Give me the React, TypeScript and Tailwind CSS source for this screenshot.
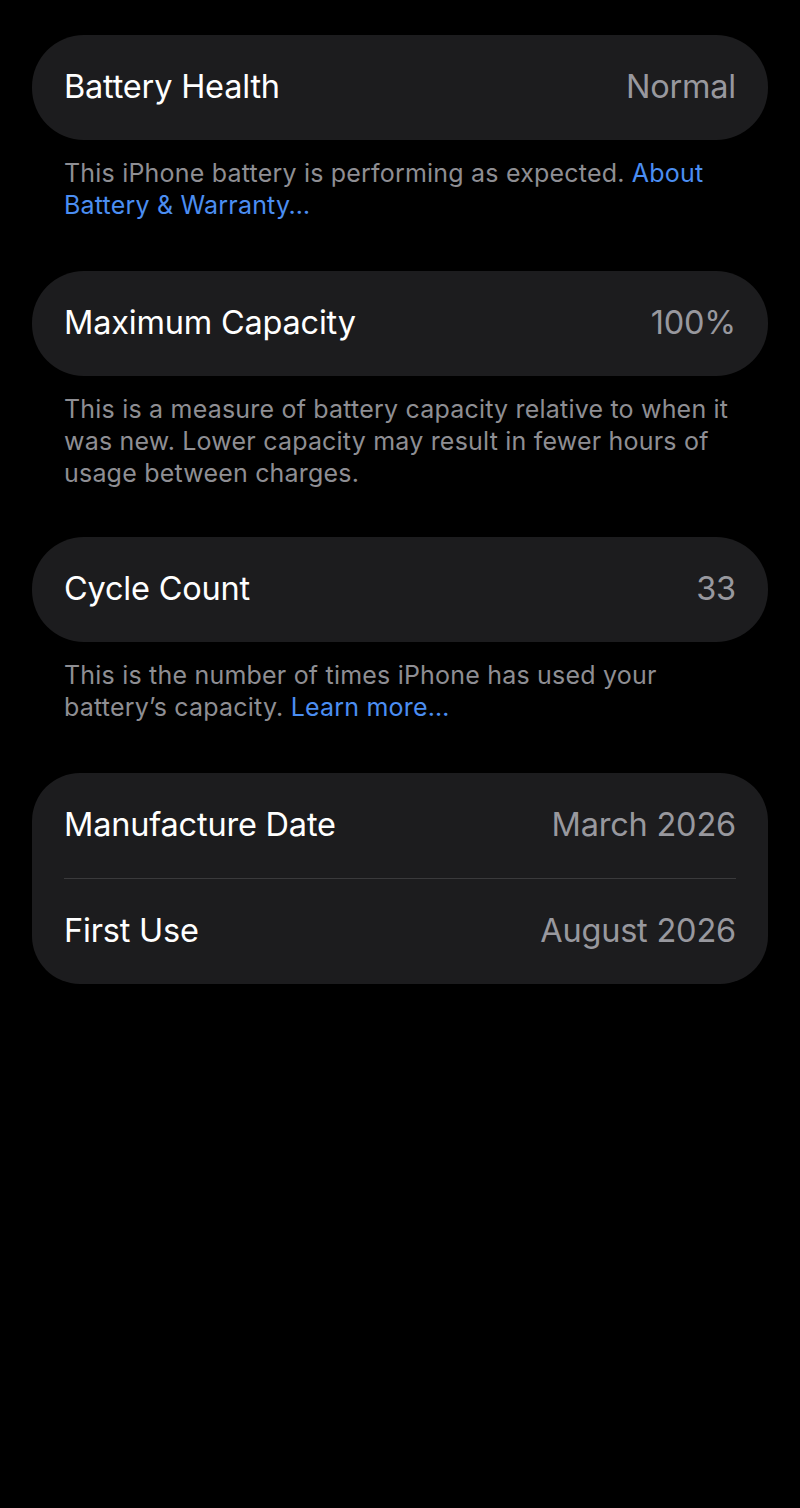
import React from 'react';

const font = { fontFamily: 'Inter, "Noto Sans", sans-serif' };

function Row({ label, value }: { label: string; value: string }) {
  return (
    <div className="h-[105px] flex items-center justify-between">
      <span className="text-[32.5px] text-white tracking-[-0.2px]">{label}</span>
      <span className="text-[32.5px] text-[#98989e] tracking-[-0.2px]">{value}</span>
    </div>
  );
}

function Card({ children }: { children: React.ReactNode }) {
  return <div className="bg-[#1c1c1e] rounded-[52px] px-8">{children}</div>;
}

function Footer({ children }: { children: React.ReactNode }) {
  return (
    <p className="px-8 pt-[17px] text-[25px] leading-[32px] tracking-[0.2px] text-[#8e8e93]">
      {children}
    </p>
  );
}

export default function App() {
  return (
    <div className="w-[800px] h-[1508px] bg-black px-8 pt-[35px]" style={font}>
      <Card>
        <Row label="Battery Health" value="Normal" />
      </Card>
      <Footer>
        This iPhone battery is performing as expected.{' '}
        <span className="text-[#4b8ef2]">About Battery &amp; Warranty…</span>
      </Footer>

      <div className="mt-[50px]">
        <Card>
          <Row label="Maximum Capacity" value="100%" />
        </Card>
      </div>
      <Footer>
        This is a measure of battery capacity relative to when it was new. Lower capacity may result in fewer hours of usage between charges.
      </Footer>

      <div className="mt-[48px]">
        <Card>
          <Row label="Cycle Count" value="33" />
        </Card>
      </div>
      <Footer>
        This is the number of times iPhone has used your battery’s capacity.{' '}
        <span className="text-[#4b8ef2]">Learn more…</span>
      </Footer>

      <div className="mt-[50px]">
        <div className="bg-[#1c1c1e] rounded-[48px] px-8">
          <Row label="Manufacture Date" value="March 2026" />
          <div className="h-px bg-[#3a3a3c]" />
          <Row label="First Use" value="August 2026" />
        </div>
      </div>
    </div>
  );
}
